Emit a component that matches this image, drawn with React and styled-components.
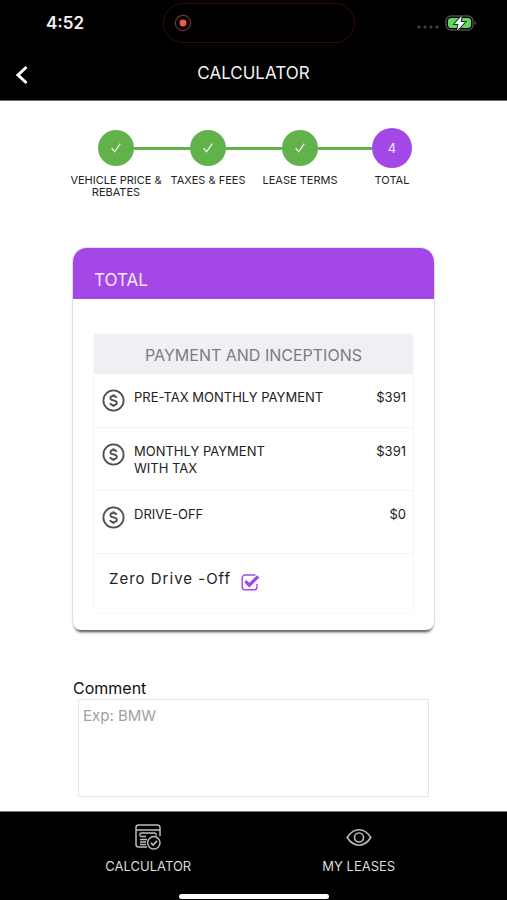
import React, { useState } from "react";
import styled, { createGlobalStyle } from "styled-components";

const GlobalStyle = createGlobalStyle`
  * { box-sizing: border-box; }
  body {
    margin: 0;
    background: #fff;
    color: #222;
    font-family: Inter, "Liberation Sans", sans-serif;
  }
  button, input, textarea { font: inherit; }
`;

const Screen = styled.div`
  display: flex;
  flex-direction: column;
  min-height: 100vh;
`;

const TopBar = styled.header`
  background: #000;
  color: #f2f2f2;
  border-bottom: 1px solid #6b6b6b;
`;

const StatusBar = styled.div`
  display: grid;
  grid-template-columns: 1fr 192px 1fr;
  align-items: center;
  padding: 3px 0 0 10px;
`;

const Clock = styled.time`
  padding-left: 36px;
  font-size: 17px;
  line-height: 20px;
  font-weight: 600;
`;

const Island = styled.div`
  display: flex;
  align-items: center;
  height: 40px;
  padding-left: 10px;
  border: 1px solid #360b0b;
  border-radius: 20px;
`;

const Indicators = styled.div`
  display: flex;
  align-items: center;
  justify-content: flex-end;
  gap: 6px;
  padding-right: 30px;
`;

const TitleBar = styled.div`
  display: grid;
  grid-template-columns: 44px 1fr 44px;
  align-items: center;
  height: 57px;
  padding-top: 2px;
`;

const BackButton = styled.button`
  display: flex;
  align-items: center;
  justify-content: center;
  height: 44px;
  padding: 5px 0 0;
  border: 0;
  background: none;
  color: #fff;
`;

const Title = styled.h1`
  margin: 0;
  font-size: 17px;
  line-height: 24px;
  font-weight: 400;
  text-align: center;
`;

const Content = styled.main`
  flex: 1;
  padding: 27px 73px 14px;
`;

const Stepper = styled.ol`
  display: grid;
  grid-template-columns: repeat(4, 1fr);
  margin: 0 -4px 0 -3px;
  padding: 0;
  list-style: none;
`;

const Step = styled.li`
  display: flex;
  flex-direction: column;
  align-items: center;
`;

const Track = styled.div`
  display: flex;
  align-items: center;
  align-self: stretch;
  height: 40px;
`;

const Rail = styled.span`
  flex: 1;
  height: 3px;
  background: ${(p) => (p.$hidden ? "transparent" : "#62b24c")};
`;

const StepDot = styled.span`
  display: flex;
  align-items: center;
  justify-content: center;
  width: ${(p) => (p.$active ? 40 : 36)}px;
  height: ${(p) => (p.$active ? 40 : 36)}px;
  border-radius: 50%;
  background: ${(p) => (p.$active ? "#a347e6" : "#62b24c")};
  color: #f6ecff;
  font-size: 13px;
`;

const StepLabel = styled.span`
  margin: 6px -4px 0;
  font-size: 11px;
  line-height: 12px;
  text-align: center;
`;

const Card = styled.section`
  margin-top: 50px;
  border-radius: 14px 14px 8px 8px;
  background: #fff;
  box-shadow: 0 0 2px #999, 0 4px 3px -2px #444;
`;

const CardTitle = styled.h2`
  margin: 0;
  padding: 20px 21px 7px;
  border-radius: 14px 14px 0 0;
  background: #a347e6;
  color: #f8e8ff;
  font-size: 17px;
  line-height: 24px;
  font-weight: 400;
`;

const CardBody = styled.div`
  padding: 34px 20px 16px;
`;

const Panel = styled.div`
  border: 1px solid #f7f7f8;
  border-radius: 4px 4px 8px 8px;
  overflow: hidden;
`;

const PaymentTable = styled.table`
  width: 100%;
  border-collapse: collapse;
  font-size: 13px;
  line-height: 17px;
`;

const Caption = styled.caption`
  padding: 9px 0 7px;
  background: #f0eff4;
  color: #7c7c80;
  font-size: 16px;
  line-height: 24px;
`;

const PaymentRow = styled.tr`
  height: ${(p) => (p.$first ? 53 : 63)}px;
  border-bottom: 1px solid #f5f5f6;
`;

const IconCell = styled.td`
  width: 40px;
  padding: 15px 0 0 8px;
  vertical-align: top;
  svg { display: block; }
`;

const NameCell = styled.th`
  padding: 15px 0 0;
  font-weight: 400;
  text-align: left;
  vertical-align: top;
  white-space: pre-line;
`;

const AmountCell = styled.td`
  padding: 15px 7px 0 0;
  text-align: right;
  vertical-align: top;
`;

const ZeroRow = styled.label`
  display: flex;
  align-items: flex-start;
  gap: 10px;
  height: 59px;
  padding: 15px 15px 0;
  font-size: 15px;
  line-height: 20px;
  letter-spacing: 1px;
`;

const TickBox = styled.span`
  display: grid;
  padding-top: 4px;
  > * { grid-area: 1 / 1; }
`;

const TickInput = styled.input`
  width: 19px;
  height: 19px;
  margin: 0;
  opacity: 0;
`;

const CommentLabel = styled.label`
  display: block;
  margin: 48px 0 1px;
  color: #111;
  font-size: 16px;
  line-height: 20px;
`;

const CommentField = styled.div`
  padding: 0 5px;
`;

const CommentBox = styled.textarea`
  display: block;
  width: 100%;
  height: 98px;
  padding: 6px 4px;
  border: 1px solid #e6e6e6;
  border-radius: 0;
  background: #fff;
  font-size: 15px;
  line-height: 20px;
  resize: none;
  &::placeholder { color: #a0a0a0; opacity: 1; }
`;

const TabBar = styled.nav`
  display: flex;
  flex-direction: column;
  background: #000;
  border-top: 1px solid #777;
`;

const Tabs = styled.div`
  display: grid;
  grid-template-columns: 1fr 1fr;
  padding: 11px 43px 0;
`;

const Tab = styled.button`
  display: flex;
  flex-direction: column;
  align-items: center;
  gap: 7px;
  padding: 0;
  border: 0;
  background: none;
  color: #dcdcdc;
  font-size: 13px;
  line-height: 16px;
`;

const HomeIndicator = styled.div`
  align-self: center;
  width: 150px;
  height: 5px;
  margin: 20px 0 1px;
  border-radius: 3px;
  background: #fff;
`;

const RecordIcon = () => (
  <svg width="18" height="18" viewBox="0 0 18 18" aria-hidden="true">
    <circle cx="9" cy="9" r="7.7" fill="none" stroke="#7c302b" strokeWidth="1.2" />
    <circle cx="9" cy="9" r="3.4" fill="#f4584c" />
  </svg>
);

const SignalDots = () => (
  <svg width="22" height="12" viewBox="0 0 22 12" fill="#454545" aria-hidden="true">
    <circle cx="2" cy="10" r="1.6" />
    <circle cx="8" cy="10" r="1.6" />
    <circle cx="14" cy="10" r="1.6" />
    <circle cx="20" cy="10" r="1.6" />
  </svg>
);

const BatteryIcon = () => (
  <svg width="32" height="16" viewBox="0 0 32 16" aria-hidden="true">
    <rect x="1" y="1" width="27" height="14" rx="5" fill="none" stroke="#4c514d" strokeWidth="1.4" />
    <rect x="3" y="3" width="23" height="10" rx="3" fill="#62d765" />
    <path d="M29.5 5.8c2 .8 2 3.6 0 4.4z" fill="#4c514d" />
    <path d="M16.6 1 9.5 9h4l-1.3 6.6L20 7h-4.3z" fill="#fff" stroke="#173719" strokeWidth="2" paintOrder="stroke" />
  </svg>
);

const BackIcon = () => (
  <svg width="14" height="20" viewBox="0 0 14 20" aria-hidden="true">
    <path d="M11.5 2 3 10l8.5 8" fill="none" stroke="currentColor" strokeWidth="3" />
  </svg>
);

const StepCheck = () => (
  <svg width="12" height="12" viewBox="0 0 12 12" aria-label="Done" role="img">
    <path d="M1.6 6.2 4.6 9.8 10.3 1.7" fill="none" stroke="#f2fbef" strokeWidth="1.2" />
  </svg>
);

const DollarIcon = () => (
  <svg width="23" height="23" viewBox="0 0 23 23" fill="none" stroke="#505050" aria-hidden="true">
    <circle cx="11.5" cy="11.5" r="10.1" strokeWidth="1.8" />
    <path d="M14.7 8.9C14.2 7.6 13 7 11.5 7 9.7 7 8.4 7.8 8.4 9.2c0 3.2 6.5 1.3 6.5 4.6 0 1.5-1.5 2.3-3.4 2.3-1.7 0-3-.8-3.4-2.200M11.5 5.2V7M11.5 16.1v1.9" strokeWidth="1.8" />
  </svg>
);

const TickIcon = ({ checked }) => (
  <svg width="19" height="19" viewBox="0 0 19 19" fill="none" stroke="#a347e6" aria-hidden="true">
    <path d="M14.5 2H4A2.8 2.8 0 0 0 1.2 4.800V14A2.8 2.8 0 0 0 4 16.8h9.2A2.8 2.8 0 0 0 16 14v-3" strokeWidth="1.4" />
    {checked && <path d="M4.3 8.2 8.3 12.2 17.2 3.3" strokeWidth="3.2" />}
  </svg>
);

const CalculatorIcon = () => (
  <svg width="28" height="28" viewBox="0 0 28 28" fill="none" stroke="#bdbdbd" strokeWidth="1.5" aria-hidden="true">
    <path d="M13 24H4.5A2.5 2.5 0 0 1 2 21.5v-17A2.5 2.5 0 0 1 4.5 2h19A2.5 2.5 0 0 1 26 4.500V13M2 7h24" />
    <path d="M12 13.5H7.500a1.2 1.2 0 0 1 0-3.500h13.200a1.7 1.7 0 0 1 1.6 1.700v1M6 16.500h7M6 19h6M6 21.500h6" strokeWidth="1.3" />
    <circle cx="19.8" cy="19.8" r="6.2" />
    <path d="m17 19.8 2.2 2.2 3.8-4.3" strokeWidth="1.7" />
  </svg>
);

const EyeIcon = () => (
  <svg width="28" height="28" viewBox="0 0 28 28" fill="none" stroke="#b9b9b9" strokeWidth="1.6" aria-hidden="true">
    <path d="M2.2 14.5C5.5 9.3 9.3 6.7 14 6.7s8.5 2.6 11.8 7.800C22.5 19.7 18.7 22.2 14 22.2S5.5 19.7 2.2 14.5Z" />
    <circle cx="14" cy="14.5" r="4.5" />
  </svg>
);

const steps = [
  { label: "VEHICLE PRICE & REBATES", done: true },
  { label: "TAXES & FEES", done: true },
  { label: "LEASE TERMS", done: true },
  { label: "TOTAL", done: false },
];

const payments = [
  { name: "PRE-TAX MONTHLY PAYMENT", amount: "$391" },
  { name: "MONTHLY PAYMENT\nWITH TAX", amount: "$391" },
  { name: "DRIVE-OFF", amount: "$0" },
];

export default function App() {
  const [zeroDriveOff, setZeroDriveOff] = useState(true);
  return (
    <Screen>
      <GlobalStyle />
      <TopBar>
        <StatusBar>
          <Clock>4:52</Clock>
          <Island><RecordIcon /></Island>
          <Indicators><SignalDots /><BatteryIcon /></Indicators>
        </StatusBar>
        <TitleBar>
          <BackButton type="button" aria-label="Back"><BackIcon /></BackButton>
          <Title>CALCULATOR</Title>
        </TitleBar>
      </TopBar>

      <Content>
        <Stepper>
          {steps.map((step, i) => (
            <Step key={step.label}>
              <Track>
                <Rail $hidden={i === 0} />
                <StepDot $active={!step.done}>{step.done ? <StepCheck /> : i + 1}</StepDot>
                <Rail $hidden={i === steps.length - 1} />
              </Track>
              <StepLabel>{step.label}</StepLabel>
            </Step>
          ))}
        </Stepper>

        <Card>
          <CardTitle>TOTAL</CardTitle>
          <CardBody>
            <Panel>
              <PaymentTable>
                <Caption>PAYMENT AND INCEPTIONS</Caption>
                <tbody>
                  {payments.map((p, i) => (
                    <PaymentRow key={p.name} $first={i === 0}>
                      <IconCell><DollarIcon /></IconCell>
                      <NameCell scope="row">{p.name}</NameCell>
                      <AmountCell>{p.amount}</AmountCell>
                    </PaymentRow>
                  ))}
                </tbody>
              </PaymentTable>
              <ZeroRow>
                Zero Drive -Off
                <TickBox>
                  <TickIcon checked={zeroDriveOff} />
                  <TickInput
                    type="checkbox"
                    checked={zeroDriveOff}
                    onChange={(e) => setZeroDriveOff(e.target.checked)}
                  />
                </TickBox>
              </ZeroRow>
            </Panel>
          </CardBody>
        </Card>

        <CommentLabel htmlFor="comment">Comment</CommentLabel>
        <CommentField>
          <CommentBox id="comment" placeholder="Exp: BMW" />
        </CommentField>
      </Content>

      <TabBar>
        <Tabs>
          <Tab type="button"><CalculatorIcon />CALCULATOR</Tab>
          <Tab type="button"><EyeIcon />MY LEASES</Tab>
        </Tabs>
        <HomeIndicator />
      </TabBar>
    </Screen>
  );
}
